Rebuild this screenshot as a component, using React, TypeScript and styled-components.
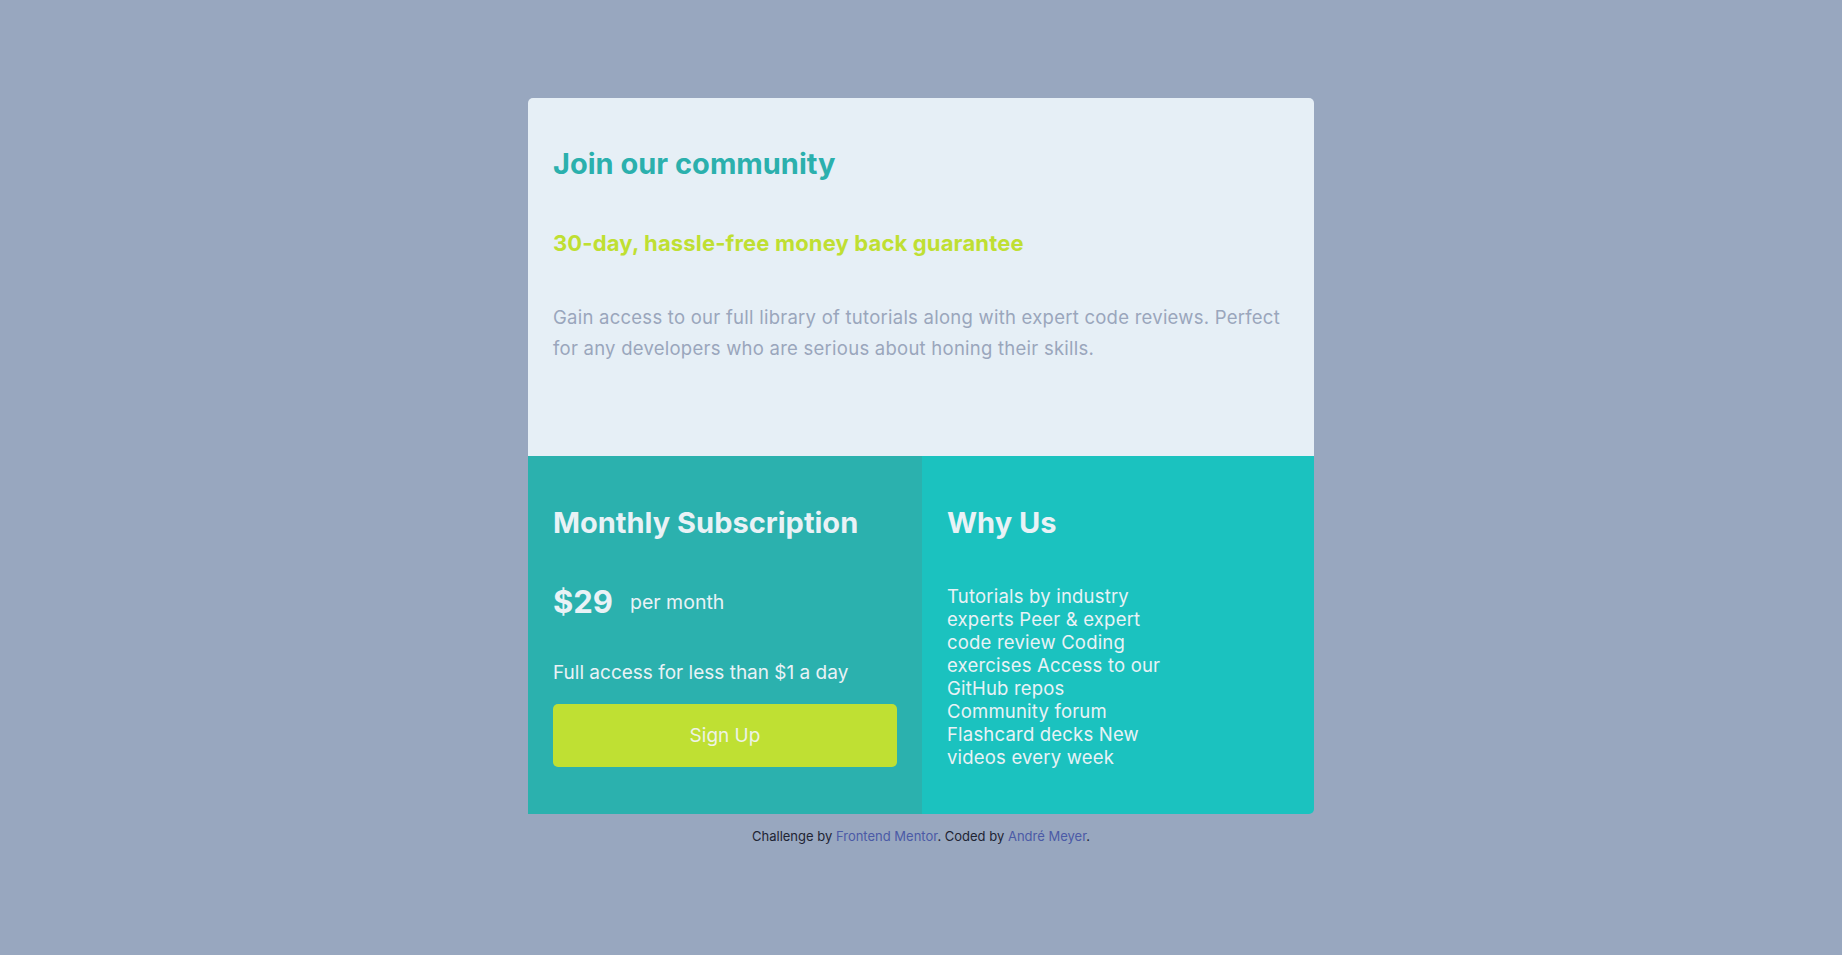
import React from "react";
import styled, { createGlobalStyle } from "styled-components";

const Global = createGlobalStyle`
  html, body { margin: 0; padding: 0; }
  body {
    background: #98a7bf;
    font-family: Inter, "Liberation Sans", sans-serif;
  }
`;

const Page = styled.main`
  display: flex;
  flex-direction: column;
  align-items: center;
  padding-top: 98px;
`;

const Card = styled.section`
  width: 786px;
  display: grid;
  grid-template-columns: 394px 392px;
`;

const Top = styled.div`
  grid-column: 1 / -1;
  background: #e6eff6;
  border-radius: 5px 5px 0 0;
  padding: 48px 25px 0;
  height: 358px;
  box-sizing: border-box;
`;

const Title = styled.h1`
  margin: 0;
  font-size: 29px;
  line-height: 36px;
  font-weight: 700;
  color: #2bb0ad;
`;

const Guarantee = styled.h2`
  margin: 47px 0 0;
  font-size: 22px;
  line-height: 28px;
  font-weight: 700;
  letter-spacing: 0.15px;
  color: #bfdf32;
`;

const Lead = styled.p`
  margin: 45px 0 0;
  font-size: 18.5px;
  line-height: 30.5px;
  letter-spacing: 0.25px;
  color: #9aa6bc;
`;

const Column = styled.div<{ $tone: "dark" | "light" }>`
  background: ${(p) => (p.$tone === "dark" ? "#2bb1ae" : "#1bc2bf")};
  border-radius: ${(p) => (p.$tone === "light" ? "0 0 5px 0" : "0")};
  padding: 49px 25px ${(p) => (p.$tone === "dark" ? "47px" : "30px")};
  color: #e9f2f6;
  display: flex;
  flex-direction: column;
`;

const ColTitle = styled.h3`
  margin: 0;
  font-size: 29px;
  line-height: 36px;
  font-weight: 700;
`;

const PriceRow = styled.div`
  display: flex;
  align-items: center;
  gap: 17px;
  margin-top: 41px;
`;

const Price = styled.span`
  font-size: 31px;
  font-weight: 700;
  line-height: 40px;
`;

const Per = styled.span`
  font-size: 19.5px;
`;

const Note = styled.p`
  margin: 39px 0 0;
  font-size: 19px;
  line-height: 24px;
`;

const Button = styled.button`
  margin-top: 19px;
  height: 63px;
  border: none;
  border-radius: 5px;
  background: #bfe033;
  color: #eef3e6;
  font-family: inherit;
  font-size: 19px;
  cursor: pointer;
`;

const Features = styled.ul`
  list-style: none;
  margin: 44px 0 0;
  padding: 0;
  width: 216px;
  font-size: 18.5px;
  line-height: 23px;
  letter-spacing: 0.2px;
`;

const Feature = styled.li`
  display: inline;
`;

const Attribution = styled.footer`
  margin-top: 14px;
  font-size: 13px;
  color: #1e2433;
  text-align: center;
`;

const Link = styled.a`
  color: #4b5aa6;
  text-decoration: none;
`;

const features = [
  "Tutorials by industry experts",
  "Peer & expert code review",
  "Coding exercises",
  "Access to our GitHub repos",
  "Community forum",
  "Flashcard decks",
  "New videos every week",
];

export default function App() {
  return (
    <>
      <Global />
      <Page>
        <Card>
          <Top>
            <Title>Join our community</Title>
            <Guarantee>30-day, hassle-free money back guarantee</Guarantee>
            <Lead>
              Gain access to our full library of tutorials along with expert code reviews. Perfect for any
              developers who are serious about honing their skills.
            </Lead>
          </Top>
          <Column $tone="dark">
            <ColTitle>Monthly Subscription</ColTitle>
            <PriceRow>
              <Price>$29</Price>
              <Per>per month</Per>
            </PriceRow>
            <Note>Full access for less than $1 a day</Note>
            <Button>Sign Up</Button>
          </Column>
          <Column $tone="light">
            <ColTitle>Why Us</ColTitle>
            <Features>
              {features.map((f, i) => (
                <Feature key={f}>
                  {f}
                  {i < features.length - 1 ? " " : ""}
                </Feature>
              ))}
            </Features>
          </Column>
        </Card>
        <Attribution>
          Challenge by <Link href="#">Frontend Mentor</Link>. Coded by <Link href="#">André Meyer</Link>.
        </Attribution>
      </Page>
    </>
  );
}
